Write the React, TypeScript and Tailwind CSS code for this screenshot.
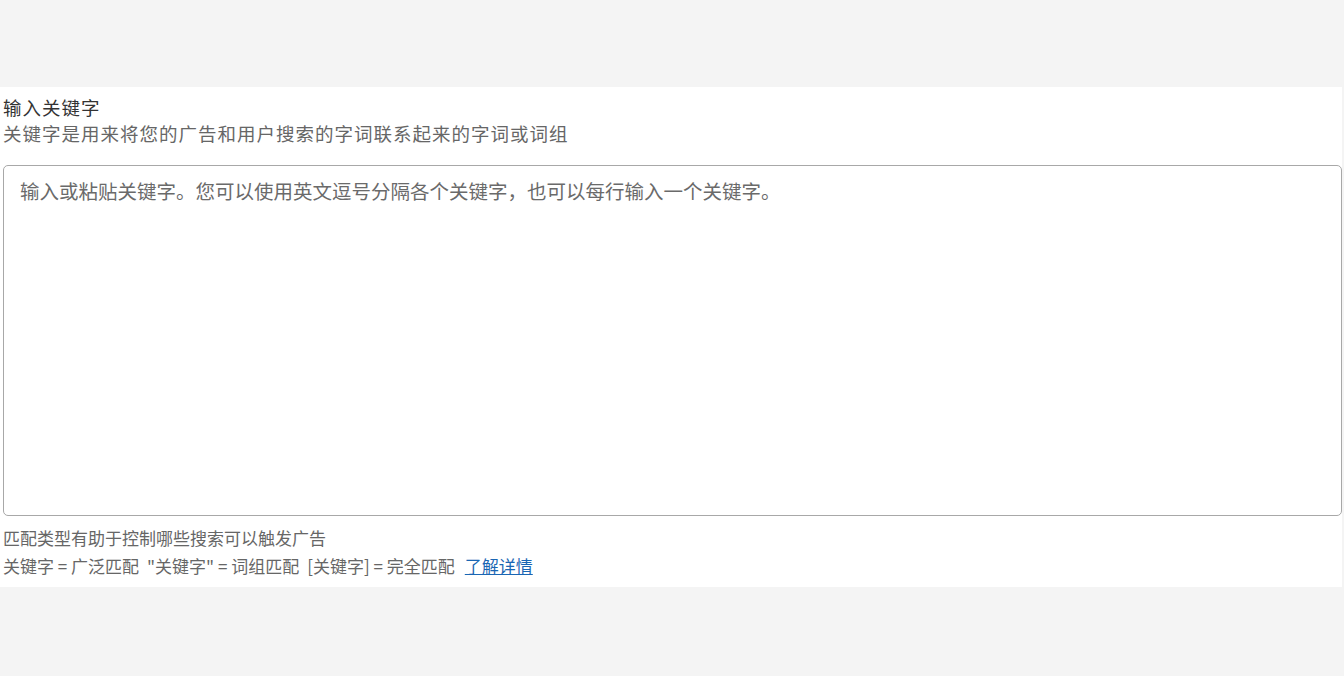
import React from "react";

export default function App() {
  const font = { fontFamily: '"Microsoft YaHei", "Noto Sans CJK SC", "Noto Sans", sans-serif' };
  return (
    <div className="w-[1344px] h-[676px] bg-[#f4f4f4] flex flex-col" style={font}>
      <div className="h-[87px] shrink-0" />
      <div className="h-[500px] shrink-0 mr-[2px] bg-white flex flex-col pl-[3px] pt-[7px]">
        <div className="text-[18.5px] tracking-[1px] leading-[26px] text-[#333]">输入关键字</div>
        <div className="text-[18.5px] tracking-[1px] leading-[26px] text-[#666]">关键字是用来将您的广告和用户搜索的字词联系起来的字词或词组</div>
        <textarea
          className="mt-[19px] h-[351px] w-[1339px] resize-none rounded-[5px] border border-[#a8a8a8] bg-white pl-[16px] pt-[12px] text-[19.5px] leading-[26px] text-[#333] placeholder:text-[#6a6a6a] outline-none"
          placeholder="输入或粘贴关键字。您可以使用英文逗号分隔各个关键字，也可以每行输入一个关键字。"
        />
        <div className="mt-[9px] text-[17px] leading-[26px] text-[#666]">匹配类型有助于控制哪些搜索可以触发广告</div>
        <div className="mt-[2px] flex text-[17px] leading-[26px] text-[#666] whitespace-pre">
          <span className="mr-[8px]">关键字 = 广泛匹配</span>
          <span className="mr-[8px]">"关键字" = 词组匹配</span>
          <span className="mr-[10px]">[关键字] = 完全匹配</span>
          <a className="text-[#1a66b3] underline">了解详情</a>
        </div>
      </div>
    </div>
  );
}
